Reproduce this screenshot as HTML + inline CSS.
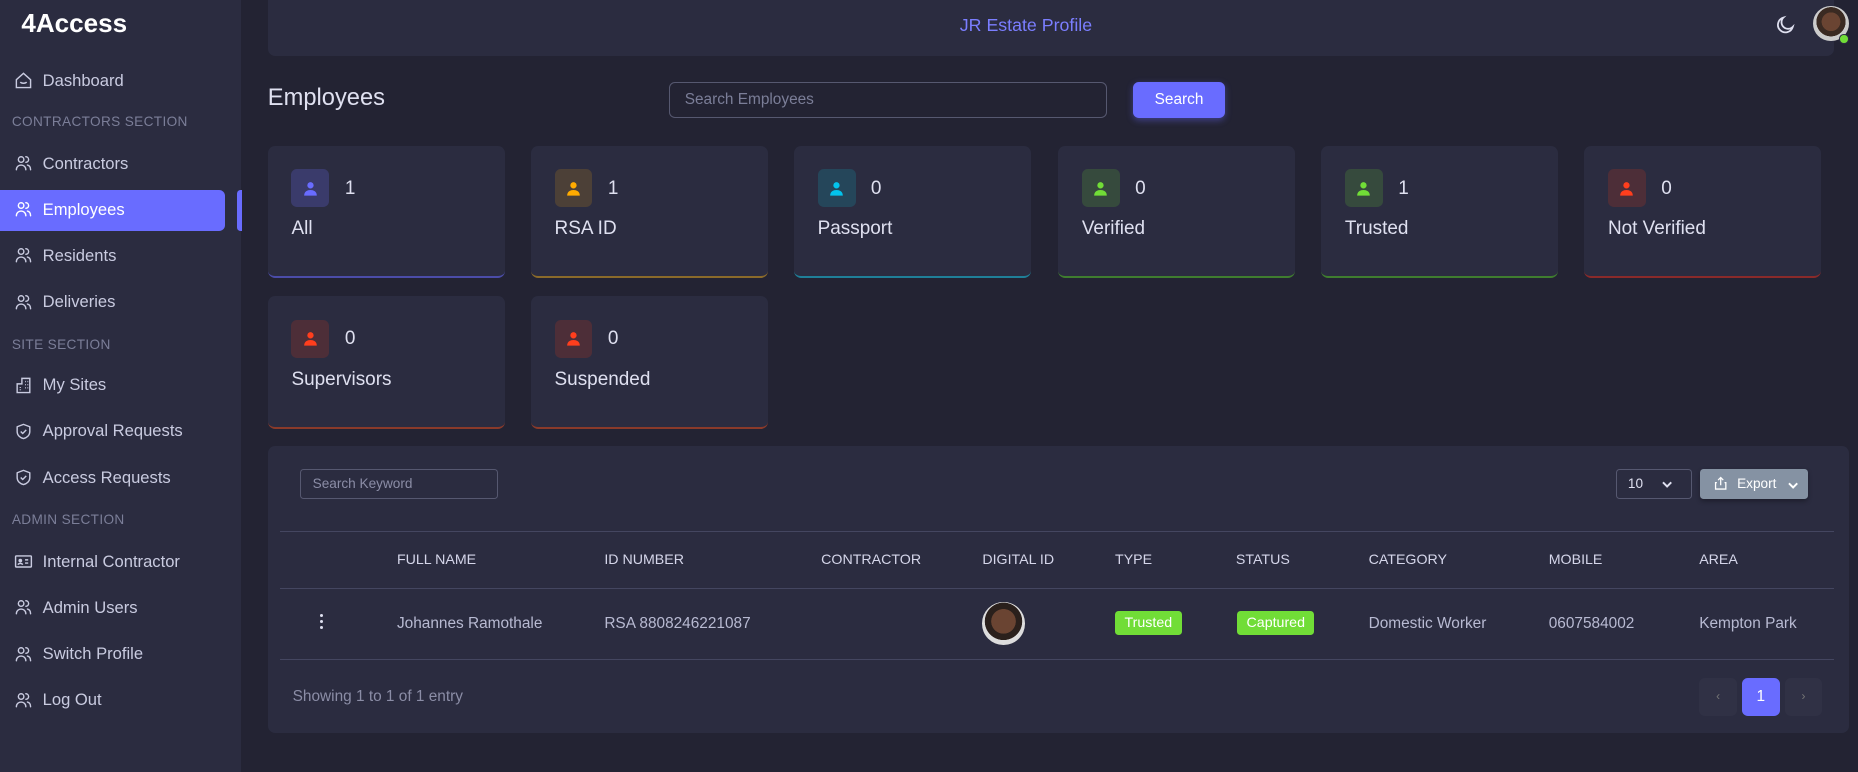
<!DOCTYPE html>
<html><head><meta charset="utf-8"><style>
*{box-sizing:border-box;margin:0;padding:0}
html,body{width:1858px;height:772px;overflow:hidden;background:#232333}
#w{zoom:1.18495;width:1568px;height:652px;position:relative;font-family:"Liberation Sans",sans-serif;color:#cfd0e6}
.a{position:absolute;white-space:nowrap}
.sb{left:0;top:0;width:203px;height:652px;background:#2b2c40}
.logo{left:18px;top:7px;font-size:22px;font-weight:bold;color:#fff}
.it{left:12px;font-size:14px;color:#c9cbe0;display:flex;align-items:center;gap:8px;height:20px}
.it svg{width:16px;height:16px}
.sec{left:10px;font-size:11.5px;color:#7b7e98;letter-spacing:.3px}
.act{left:0;top:160px;width:190px;height:35px;background:#696cff;border-radius:0 5px 5px 0}
.card{background:#2b2c40;border-radius:6px;width:200px;height:112px}
.ib{left:20px;top:20px;width:32px;height:32px;border-radius:5px;display:flex;align-items:center;justify-content:center}
.num{left:65px;top:27px;font-size:16px;color:#dfe0f0}
.lab{left:20px;top:61px;font-size:16px;color:#dfe0f0}
.th{top:466px;font-size:12px;color:#d5d6ea}
.td{top:519px;font-size:13px;color:#b8bad2}
.ln{left:236px;width:1312px;height:1px;background:#444660}
.badge{top:516px;height:20px;background:#71dd37;color:#fff;font-size:12px;border-radius:3px;padding:3px 8px}
</style></head><body><div id="w">
<div class="a sb"></div>
<div class="a logo">4Access</div>
<div class="a act"></div>
<div class="a" style="left:200px;top:160px;width:4px;height:35px;background:#696cff;border-radius:3px 0 0 3px"></div>
<svg width="0" height="0" style="position:absolute"><defs>
<symbol id="u" viewBox="0 0 24 24"><g fill="none" stroke="currentColor" stroke-width="1.8" stroke-linecap="round"><circle cx="9" cy="7" r="3.5"/><path d="M3 20c0-4 3-6 6-6s6 2 6 6M15 3.5a3.5 3.5 0 0 1 0 7M17 14c2.5.5 4 2.5 4 6"/></g></symbol>
<symbol id="sh" viewBox="0 0 24 24"><g fill="none" stroke="currentColor" stroke-width="1.8" stroke-linejoin="round"><path d="M12 3l8 3v6c0 5-4 8-8 9-4-1-8-4-8-9V6z"/><path d="M8.5 12l2.5 2.5 4.5-4.5"/></g></symbol>
<symbol id="p" viewBox="0 0 24 24"><circle cx="12" cy="8" r="4" fill="currentColor"/><path d="M4 21c0-5 4-7 8-7s8 2 8 7z" fill="currentColor"/></symbol>
<symbol id="cv" viewBox="0 0 12 12"><path d="M2.5 4.5l3.5 3.5 3.5-3.5" fill="none" stroke="currentColor" stroke-width="1.6"/></symbol>
</defs></svg>
<div class="a it" style="top:58px"><svg viewBox="0 0 24 24" fill="none" stroke="currentColor" stroke-width="1.8"><path d="M3 11l9-8 9 8v10H3z"/><path d="M8 14c1.5 2 6.5 2 8 0"/></svg>Dashboard</div>
<div class="a sec" style="top:96px">CONTRACTORS SECTION</div>
<div class="a it" style="top:128px"><svg><use href="#u"/></svg>Contractors</div>
<div class="a it" style="top:167px;color:#fff"><svg><use href="#u"/></svg>Employees</div>
<div class="a it" style="top:206px"><svg><use href="#u"/></svg>Residents</div>
<div class="a it" style="top:245px"><svg><use href="#u"/></svg>Deliveries</div>
<div class="a sec" style="top:284px">SITE SECTION</div>
<div class="a it" style="top:315px"><svg viewBox="0 0 24 24" fill="none" stroke="currentColor" stroke-width="1.8"><path d="M4 21V10h6V3h10v18zM4 21h16M8 14v1M8 17v1M14 7h1M17 7h1M14 11h1M17 11h1M14 15h1M17 15h1"/></svg>My Sites</div>
<div class="a it" style="top:354px"><svg><use href="#sh"/></svg>Approval Requests</div>
<div class="a it" style="top:393px"><svg><use href="#sh"/></svg>Access Requests</div>
<div class="a sec" style="top:432px">ADMIN SECTION</div>
<div class="a it" style="top:464px"><svg viewBox="0 0 24 24" fill="none" stroke="currentColor" stroke-width="1.8"><rect x="2" y="5" width="20" height="14" rx="1"/><circle cx="8" cy="11" r="1.5" fill="currentColor"/><path d="M5 16c1-2 5-2 6 0M14 10h4M14 14h4"/></svg>Internal Contractor</div>
<div class="a it" style="top:503px"><svg><use href="#u"/></svg>Admin Users</div>
<div class="a it" style="top:542px"><svg><use href="#u"/></svg>Switch Profile</div>
<div class="a it" style="top:581px"><svg><use href="#u"/></svg>Log Out</div>

<div class="a" style="left:226px;top:0;width:1322px;height:47px;background:#2b2c40;border-radius:0 0 6px 6px"></div>
<div class="a" style="left:810px;top:13px;font-size:15px;color:#7b7eff">JR Estate Profile</div>
<svg class="a" style="left:1498px;top:12px" width="18" height="18" viewBox="0 0 24 24" fill="none" stroke="#dfe0f0" stroke-width="2"><path d="M20 14.5A8.5 8.5 0 1 1 9.5 4a7 7 0 0 0 10.5 10.5z"/></svg>
<div class="a" style="left:1530px;top:5px;width:30px;height:30px;border-radius:50%;background:radial-gradient(circle at 50% 45%,#6a4432 0 35%,#3a2a22 36% 55%,#ccc 56%)"></div>
<div class="a" style="left:1552px;top:29px;width:8px;height:8px;border-radius:50%;background:#71dd37;border:1px solid #2b2c40"></div>

<div class="a" style="left:226px;top:72px;font-size:20px;color:#dfe0f0">Employees</div>
<div class="a" style="left:565px;top:69px;width:369px;height:31px;border:1px solid #565870;border-radius:5px;font-size:13px;color:#7b7e98;padding:7px 12px">Search Employees</div>
<div class="a" style="left:956px;top:69px;width:78px;height:31px;background:#696cff;border-radius:5px;color:#fff;font-size:13px;text-align:center;line-height:31px;box-shadow:0 2px 6px rgba(105,108,255,.4)">Search</div>

<div class="a card" style="left:226px;top:123px;border-bottom:2px solid #4b4ca8"><div class="a ib" style="background:#3a3b6b;color:#696cff"><svg width="16" height="16"><use href="#p"/></svg></div><div class="a num">1</div><div class="a lab">All</div></div>
<div class="a card" style="left:448px;top:123px;border-bottom:2px solid #8a6a2a"><div class="a ib" style="background:#4c4037;color:#ffab00"><svg width="16" height="16"><use href="#p"/></svg></div><div class="a num">1</div><div class="a lab">RSA ID</div></div>
<div class="a card" style="left:670px;top:123px;border-bottom:2px solid #1f7f98"><div class="a ib" style="background:#25465a;color:#03c3ec"><svg width="16" height="16"><use href="#p"/></svg></div><div class="a num">0</div><div class="a lab">Passport</div></div>
<div class="a card" style="left:893px;top:123px;border-bottom:2px solid #3f7d2f"><div class="a ib" style="background:#364a3d;color:#71dd37"><svg width="16" height="16"><use href="#p"/></svg></div><div class="a num">0</div><div class="a lab">Verified</div></div>
<div class="a card" style="left:1115px;top:123px;border-bottom:2px solid #3f7d2f"><div class="a ib" style="background:#364a3d;color:#71dd37"><svg width="16" height="16"><use href="#p"/></svg></div><div class="a num">1</div><div class="a lab">Trusted</div></div>
<div class="a card" style="left:1337px;top:123px;border-bottom:2px solid #8a2a2a"><div class="a ib" style="background:#4d2e38;color:#ff3e1d"><svg width="16" height="16"><use href="#p"/></svg></div><div class="a num">0</div><div class="a lab">Not Verified</div></div>
<div class="a card" style="left:226px;top:250px;border-bottom:2px solid #8a3a2a"><div class="a ib" style="background:#4d2e38;color:#ff3e1d"><svg width="16" height="16"><use href="#p"/></svg></div><div class="a num">0</div><div class="a lab">Supervisors</div></div>
<div class="a card" style="left:448px;top:250px;border-bottom:2px solid #8a3a2a"><div class="a ib" style="background:#4d2e38;color:#ff3e1d"><svg width="16" height="16"><use href="#p"/></svg></div><div class="a num">0</div><div class="a lab">Suspended</div></div>

<div class="a" style="left:226px;top:376px;width:1334px;height:243px;background:#2b2c40;border-radius:6px"></div>
<div class="a" style="left:253px;top:396px;width:167px;height:25px;border:1px solid #565870;border-radius:3px;font-size:11.5px;color:#8b8da6;padding:5px 10px">Search Keyword</div>
<div class="a" style="left:1364px;top:396px;width:64px;height:25px;border:1px solid #565870;border-radius:3px;font-size:11.5px;color:#dfe0f0;padding:5px 9px">10<svg style="position:absolute;left:36px;top:6px;color:#dfe0f0" width="12" height="12"><use href="#cv"/></svg></div>
<div class="a" style="left:1435px;top:396px;width:91px;height:25px;background:#8592a3;border-radius:3px;font-size:11.5px;color:#fff;padding:6px 0 0 31px;box-shadow:0 2px 4px rgba(0,0,0,.3)"><svg style="position:absolute;left:11px;top:5px" width="13" height="14" viewBox="0 0 24 24" fill="none" stroke="#fff" stroke-width="2"><path d="M12 3v12M8 7l4-4 4 4M6 11H4v10h16V11h-2"/></svg>Export<svg style="position:absolute;left:72px;top:7px;color:#fff" width="12" height="12"><use href="#cv"/></svg></div>
<div class="a ln" style="top:448px"></div>
<div class="a ln" style="top:496px"></div>
<div class="a ln" style="top:556px"></div>
<div class="a th" style="left:335px">FULL NAME</div>
<div class="a th" style="left:510px">ID NUMBER</div>
<div class="a th" style="left:693px">CONTRACTOR</div>
<div class="a th" style="left:829px">DIGITAL ID</div>
<div class="a th" style="left:941px">TYPE</div>
<div class="a th" style="left:1043px">STATUS</div>
<div class="a th" style="left:1155px">CATEGORY</div>
<div class="a th" style="left:1307px">MOBILE</div>
<div class="a th" style="left:1434px">AREA</div>
<div class="a" style="left:270px;top:518px;width:4px;display:flex;flex-direction:column;gap:2px"><i style="width:3px;height:3px;background:#dfe0f0;border-radius:50%"></i><i style="width:3px;height:3px;background:#dfe0f0;border-radius:50%"></i><i style="width:3px;height:3px;background:#dfe0f0;border-radius:50%"></i></div>
<div class="a td" style="left:335px">Johannes Ramothale</div>
<div class="a td" style="left:510px">RSA 8808246221087</div>
<div class="a" style="left:829px;top:508px;width:36px;height:36px;border-radius:50%;background:radial-gradient(circle at 50% 45%,#6a4432 0 38%,#2a201c 39% 58%,#ddd 59%)"></div>
<div class="a badge" style="left:941px">Trusted</div>
<div class="a badge" style="left:1044px">Captured</div>
<div class="a td" style="left:1155px">Domestic Worker</div>
<div class="a td" style="left:1307px">0607584002</div>
<div class="a td" style="left:1434px">Kempton Park</div>
<div class="a" style="left:247px;top:581px;font-size:13px;color:#8b8da6">Showing 1 to 1 of 1 entry</div>
<div class="a" style="left:1434px;top:572px;width:32px;height:32px;background:#303145;border-radius:5px;color:#777;font-size:10px;text-align:center;line-height:32px">&#8249;</div>
<div class="a" style="left:1470px;top:572px;width:32px;height:32px;background:#696cff;border-radius:5px;color:#fff;font-size:13px;text-align:center;line-height:32px">1</div>
<div class="a" style="left:1506px;top:572px;width:32px;height:32px;background:#303145;border-radius:5px;color:#777;font-size:10px;text-align:center;line-height:32px">&#8250;</div>
</div></body></html>
